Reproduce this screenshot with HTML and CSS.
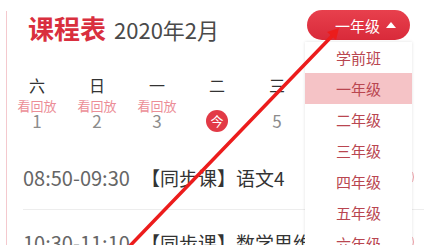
FILE: index.html
```html
<!DOCTYPE html>
<html lang="zh-CN">
<head>
<meta charset="utf-8">
<title>课程表</title>
<link rel="stylesheet" href="styles.css">
</head>
<body>
<div class="screen">
  <header class="header">
    <h1 class="title">课程表</h1>
    <span class="month">2020年2月</span>
    <div class="grade">
      <button class="grade-btn">一年级 <span class="tri"></span></button>
      <ul class="menu">
        <li>学前班</li>
        <li class="active">一年级</li>
        <li>二年级</li>
        <li>三年级</li>
        <li>四年级</li>
        <li>五年级</li>
        <li>六年级</li>
      </ul>
    </div>
  </header>
  <div class="week">
    <div class="day"><span class="dname">六</span><span class="replay">看回放</span><span class="num">1</span></div>
    <div class="day"><span class="dname">日</span><span class="replay">看回放</span><span class="num">2</span></div>
    <div class="day"><span class="dname">一</span><span class="replay">看回放</span><span class="num">3</span></div>
    <div class="day"><span class="dname">二</span><span class="replay"></span><span class="num"><span class="today">今</span></span></div>
    <div class="day"><span class="dname">三</span><span class="replay"></span><span class="num">5</span></div>
    <div class="day"><span class="dname">四</span><span class="replay"></span><span class="num">6</span></div>
    <div class="day"><span class="dname">五</span><span class="replay"></span><span class="num">7</span></div>
  </div>
  <div class="rows">
    <div class="row"><span class="time">08:50-09:30</span><span class="subject">【同步课】语文4</span><span class="go"></span></div>
    <div class="row"><span class="time">10:30-11:10</span><span class="subject">【同步课】数学思维</span><span class="go"></span></div>
  </div>
</div>
<svg class="arrow" width="424" height="245" viewBox="0 0 424 245">
  <line x1="124" y1="252" x2="333" y2="35" stroke="#ec1c1c" stroke-width="3.5" stroke-linecap="round"/>
  <polygon points="339,28 336,40 327,32" fill="#ec1c1c"/>
</svg>
</body>
</html>
```

FILE: styles.css
```css
* { box-sizing: border-box; }
html, body {
  margin: 0;
  padding: 0;
  width: 424px;
  height: 245px;
  overflow: hidden;
  background: #fff;
  font-family: "Noto Sans CJK SC", "Noto Sans", sans-serif;
}
.screen {
  margin: 11px 0 0 6px;
  border-left: 1px solid #f4c9ce;
  height: 300px;
  position: relative;
}
.header {
  display: flex;
  align-items: center;
  height: 34px;
  padding-left: 21px;
}
.title {
  margin: 0;
  font-size: 26px;
  font-weight: 700;
  color: #d92f3e;
  line-height: 34px;
}
.month {
  margin-left: 8px;
  font-size: 22px;
  color: #4a4a4a;
  line-height: 34px;
  padding-top: 2px;
}
.grade {
  margin-left: auto;
  margin-right: 14px;
  align-self: flex-start;
  margin-top: -1px;
  position: relative;
}
.grade-btn {
  width: 103px;
  height: 30px;
  border: 0;
  border-radius: 15px;
  background: linear-gradient(180deg, #e8404d, #d92a3a);
  color: #fff;
  font-family: inherit;
  font-size: 15px;
  padding: 0 0 0 14px;
  display: flex;
  align-items: center;
  justify-content: center;
  gap: 6px;
}
.tri {
  width: 0;
  height: 0;
  border-left: 5px solid transparent;
  border-right: 5px solid transparent;
  border-bottom: 6px solid #fff;
}
.menu {
  position: absolute;
  top: 32px;
  left: -2px;
  width: 107px;
  margin: 0;
  padding: 0;
  list-style: none;
  background: #fff;
  box-shadow: 0 0 3px rgba(0,0,0,0.12);
  z-index: 5;
}
.menu li {
  height: 31px;
  line-height: 31px;
  text-align: center;
  font-size: 15px;
  color: #b94650;
}
.menu li.active {
  background: #f5c3c6;
}
.week {
  display: flex;
  padding: 30px 0 16px;
}
.day {
  flex: 0 0 60px;
  display: flex;
  flex-direction: column;
  align-items: center;
}
.dname {
  font-size: 16px;
  line-height: 20px;
  color: #333;
}
.replay {
  margin-top: 4px;
  height: 14px;
  font-size: 13px;
  line-height: 14px;
  color: #ec8e97;
}
.num {
  height: 16px;
  font-size: 17px;
  line-height: 16px;
  color: #8c8c8c;
  display: flex;
  align-items: center;
  justify-content: center;
}
.today {
  width: 22px;
  height: 22px;
  border-radius: 50%;
  background: #e23a46;
  color: #fff;
  font-size: 13px;
  display: flex;
  align-items: center;
  justify-content: center;
  margin: -3px 0;
}
.row {
  margin-left: 16px;
  height: 65px;
  border-bottom: 1px solid #ededed;
  display: flex;
  align-items: center;
  position: relative;
}
.time {
  font-size: 20px;
  color: #666;
  width: 118px;
}
.subject {
  font-size: 19px;
  color: #333;
  white-space: nowrap;
}
.go {
  position: absolute;
  right: 10px;
  width: 40px;
  height: 20px;
  border: 1px solid #f0a2aa;
  border-radius: 10px;
}
.arrow {
  position: absolute;
  left: 0;
  top: 0;
  z-index: 10;
  pointer-events: none;
}
```
